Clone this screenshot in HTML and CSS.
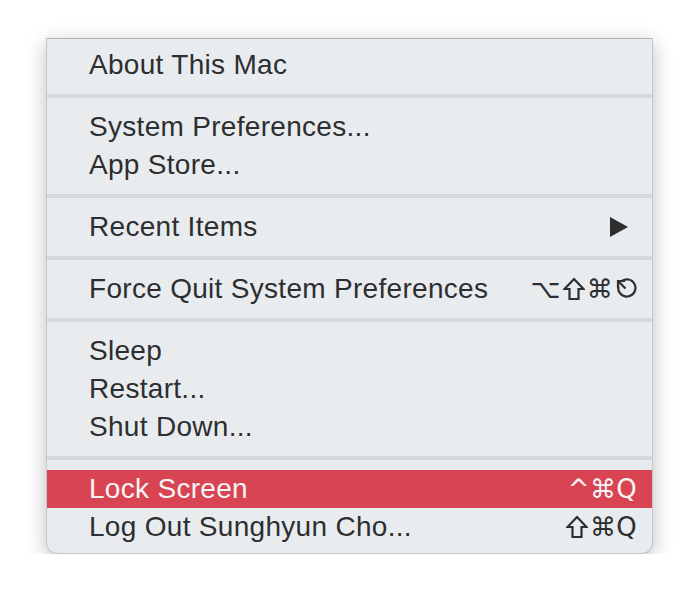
FILE: index.html
```html
<!DOCTYPE html>
<html lang="en">
<head>
  <meta charset="UTF-8" />
  <title>Apple Menu</title>
  <link rel="stylesheet" href="styles.css">
</head>
<body>
  <div class="menu">
    <div class="item">About This Mac</div>

    <div class="sep"></div>

    <div class="item">System Preferences...</div>
    <div class="item">App Store...</div>

    <div class="sep"></div>

    <div class="item">
      <span>Recent Items</span>
      <svg class="arrow" width="18" height="20" viewBox="0 0 18 20"><polygon points="0,0 18,10 0,20" /></svg>
    </div>

    <div class="sep"></div>

    <div class="item">
      <span>Force Quit System Preferences</span>
      <span class="keys">⌥<svg class="glyph" width="22" height="24" viewBox="0 0 22 24"><path d="M11 2 L20.5 12 L15.5 12 L15.5 22 L6.5 22 L6.5 12 L1.5 12 Z" /></svg>⌘<svg class="glyph" width="22" height="22" viewBox="0 0 22 22"><path d="M6 3.6 A8.6 8.6 0 1 1 3.4 8.2" /><path d="M3.2 3.2 L10.5 10.5" /><path d="M3 10 L3 3 L10 3" /></svg></span>
    </div>

    <div class="sep"></div>

    <div class="item">Sleep</div>
    <div class="item">Restart...</div>
    <div class="item">Shut Down...</div>

    <div class="sep"></div>

    <div class="item active">
      <span>Lock Screen</span>
      <span class="keys">^⌘Q</span>
    </div>
    <div class="item">
      <span>Log Out Sunghyun Cho...</span>
      <span class="keys"><svg class="glyph" width="22" height="24" viewBox="0 0 22 24"><path d="M11 2 L20.5 12 L15.5 12 L15.5 22 L6.5 22 L6.5 12 L1.5 12 Z" /></svg>⌘Q</span>
    </div>
  </div>
</body>
</html>
```

FILE: styles.css
```css
* {
  margin: 0;
  padding: 0;
  box-sizing: border-box;
}
body {
  background: #fff;
  font-family: "Liberation Sans", Arial, sans-serif;
}
.menu {
  width: 607px;
  margin: 38px 0 0 46px;
  padding: 7px 0;
  background: #e8ecef;
  border: 1px solid #c4c6c8;
  border-top-color: #b4b4b8;
  border-radius: 0 0 11px 11px;
  box-shadow: 0 5px 20px rgba(0, 0, 0, 0.26);
  color: #2e2e30;
}
.item {
  display: flex;
  align-items: center;
  justify-content: space-between;
  height: 38px;
  padding: 0 15px 0 42px;
  font-size: 28px;
  letter-spacing: 0.3px;
}
.item.active {
  background: #d94452;
  color: #f4f4f4;
}
.sep {
  height: 4px;
  margin: 10px 0;
  background: #d5d9dc;
}
.arrow {
  fill: #2e2e30;
  margin-right: 9px;
}
.keys {
  display: flex;
  align-items: center;
  gap: 2px;
  font-family: "DejaVu Sans", sans-serif;
  font-size: 26px;
}
.glyph {
  fill: none;
  stroke: #2e2e30;
  stroke-width: 2.2;
}
```
